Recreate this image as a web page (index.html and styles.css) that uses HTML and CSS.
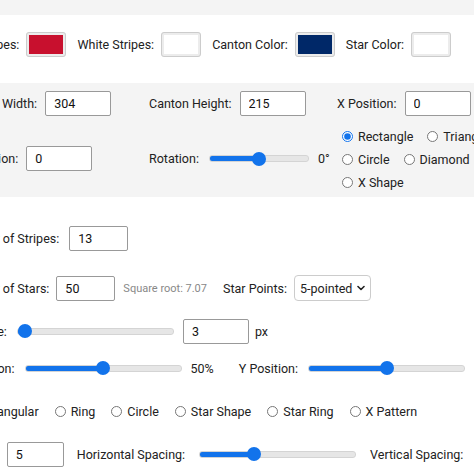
FILE: index.html
```html
<!DOCTYPE html>
<html lang="en">
<head>
    <meta charset="UTF-8">
    <meta name="viewport" content="width=device-width, initial-scale=1.0">
    <title>Flag Designer</title>
    <link rel="stylesheet" href="styles.css">
</head>
<body>
<div class="page">
    <div class="panel panel-end"></div>

    <div class="section colors">
        <div class="row">
            <label>Red Stripes:</label>
            <span class="swatch" style="background:#c8102e"></span>
            <label>White Stripes:</label>
            <span class="swatch" style="background:#ffffff"></span>
            <label>Canton Color:</label>
            <span class="swatch" style="background:#002868"></span>
            <label>Star Color:</label>
            <span class="swatch" style="background:#ffffff"></span>
        </div>
    </div>

    <div class="panel canton">
        <div class="field"><label>Canton Width:</label><input type="text" value="304"></div>
        <div class="field"><label>Canton Height:</label><input type="text" value="215"></div>
        <div class="field"><label>X Position:</label><input type="text" value="0"></div>

        <div class="field top"><label>Y Position:</label><input type="text" value="0"></div>
        <div class="field top">
            <label>Rotation:</label>
            <input type="range" class="slider short" min="-180" max="180" value="0" style="--fill:50%">
            <span class="unit">0°</span>
        </div>
        <div class="shapes">
            <label class="radio"><input type="radio" name="shape" checked>Rectangle</label>
            <label class="radio"><input type="radio" name="shape">Triangle</label>
            <label class="radio"><input type="radio" name="shape">Circle</label>
            <label class="radio"><input type="radio" name="shape">Diamond</label>
            <label class="radio"><input type="radio" name="shape">X Shape</label>
        </div>
    </div>

    <div class="section stars">
        <div class="row">
            <label>Number of Stripes:</label>
            <input type="text" class="num" value="13">
        </div>
        <div class="row spaced snug">
            <label>Number of Stars:</label>
            <input type="text" class="num" value="50">
            <span class="hint">Square root: 7.07</span>
            <label>Star Points:</label>
            <span class="select">
                <select>
                    <option>5-pointed</option>
                    <option>6-pointed</option>
                    <option>8-pointed</option>
                </select>
                <svg class="chevron" width="8" height="6" viewBox="0 0 8 6"><path d="M1 1.5 4 4.5 7 1.5" fill="none" stroke="#222" stroke-width="1.6" stroke-linecap="round" stroke-linejoin="round"/></svg>
            </span>
        </div>
        <div class="row">
            <label>Star Size:</label>
            <input type="range" class="slider" min="1" max="40" value="1" style="--fill:4%">
            <input type="text" value="3">
            <span>px</span>
        </div>
        <div class="row close">
            <label>X Position:</label>
            <input type="range" class="slider" min="0" max="100" value="50" style="--fill:50%">
            <span class="unit wide">50%</span>
            <label>Y Position:</label>
            <input type="range" class="slider" min="0" max="100" value="50" style="--fill:50%">
        </div>
        <div class="row patterns">
            <label class="radio"><input type="radio" name="pattern" checked>Rectangular</label>
            <label class="radio"><input type="radio" name="pattern">Ring</label>
            <label class="radio"><input type="radio" name="pattern">Circle</label>
            <label class="radio"><input type="radio" name="pattern">Star Shape</label>
            <label class="radio"><input type="radio" name="pattern">Star Ring</label>
            <label class="radio"><input type="radio" name="pattern">X Pattern</label>
        </div>
        <div class="row spacing">
            <label>Margin:</label>
            <input type="text" class="num small" value="5">
            <label class="wide">Horizontal Spacing:</label>
            <input type="range" class="slider" min="0" max="30" value="10" style="--fill:35%">
            <label class="wide">Vertical Spacing:</label>
            <input type="range" class="slider" min="0" max="30" value="10" style="--fill:35%">
        </div>
    </div>
</div>
</body>
</html>
```
FILE: styles.css
```css
body { margin: 0; overflow: hidden; background: #fff; font-family: Roboto, "Noto Sans", sans-serif; font-size: 12.5px; color: #222; }
.page { width: 700px; margin-left: -41px; }

.panel { background: #f4f4f4; }
.panel-end { height: 15px; }

.row { display: flex; align-items: center; height: 26px; white-space: nowrap; }
.row label { margin-right: 10px; }

.colors { padding: 16px 0 26px; }
.colors .row { margin-left: -6px; }
.colors .row label { margin-right: 7px; }
.swatch { width: 34px; height: 19px; border: 3px solid #ececec; outline: 1px solid #ccc; outline-offset: -1px; border-radius: 3px; margin-right: 11px; }

.canton { display: grid; grid-template-columns: 190px 188px 190px; row-gap: 9px; padding: 8px 0 3px; align-items: start; }
.field { display: flex; align-items: center; height: 25px; white-space: nowrap; }
.field label { margin-right: 8px; }
.field.top { margin-top: 21px; }

input[type=text] { font: inherit; color: #111; width: 66px; height: 25px; box-sizing: border-box; padding: 0 8px; border: 1px solid #999; border-radius: 2px; background: #fff; margin-right: 6px; }
input.num { width: 59px; }
input.num.small { width: 57px; margin-right: 13px; }

.shapes { display: flex; flex-wrap: wrap; column-gap: 9px; height: 69px; align-content: space-between; }
.radio { display: flex; align-items: center; height: 23px; }
.radio input { width: 11px; height: 11px; margin: 0 5px; accent-color: #1273eb; }

.slider { -webkit-appearance: none; appearance: none; width: 155px; height: 5px; margin: 0 9px 0 0; border-radius: 3px; border: 1px solid #d4d4d4; background: linear-gradient(to right, #1273eb var(--fill), #e6e6e6 var(--fill)); }
.slider.short { width: 98px; margin-left: 2px; }
.slider::-webkit-slider-thumb { -webkit-appearance: none; width: 14px; height: 14px; border-radius: 50%; background: #1273eb; border: none; }
.unit { margin-right: 24px; }
.unit.wide { margin-right: 25px; }

.stars { padding-top: 28px; margin-left: -4px; }
.stars .row + .row { margin-top: 17px; }
.stars .row.spaced { margin-top: 24px; }
.stars .row.close { margin-top: 11px; }
.stars .row.snug label { margin-right: 7px; }
.hint { color: #888; font-size: 11px; margin: 0 16px 0 2px; }

.select { position: relative; display: inline-flex; }
select { -webkit-appearance: none; appearance: none; font: inherit; color: #222; width: 77px; height: 26px; padding: 0 0 0 5px; border: 1px solid #ccc; border-radius: 4px; background: #fff; }
.chevron { position: absolute; right: 6px; top: 10px; pointer-events: none; }

.patterns { margin-left: -4px; }
.stars .patterns .radio { margin-right: 11px; }
.spacing label.wide { margin-right: 14px; }
.spacing .slider { margin-right: 14px; }
```
